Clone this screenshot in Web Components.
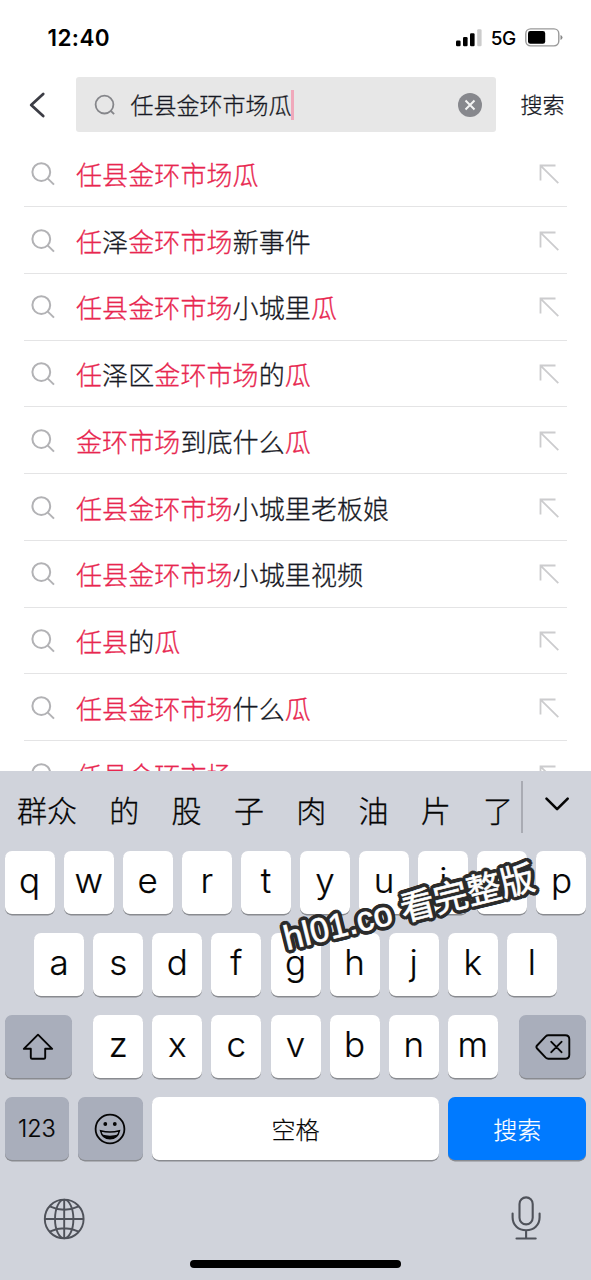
<!DOCTYPE html>
<html lang="zh-CN">
<head>
<meta charset="utf-8">
<title>搜索</title>
<style>
html,body{margin:0;height:100%;background:#fff;overflow:hidden}
body{font-family:Inter,"Noto Sans CJK SC",sans-serif}
</style>
</head>
<body>
<search-screen></search-screen>
<script>
function define(name, html) {
  const t = document.createElement('template');
  t.innerHTML = html;
  customElements.define(name, class extends HTMLElement {
    constructor() {
      super();
      this.attachShadow({ mode: 'open' }).append(t.content.cloneNode(true));
    }
  });
}

define('status-bar', `
<style>
:host{display:flex;height:77px;box-sizing:border-box;padding:0 28px 2px 47.5px;align-items:center;color:#000}
.time{font-size:22.5px;font-weight:600;flex:1;letter-spacing:.4px}
.net{font-size:19px;font-weight:500;margin:1px 9px 0 8.5px;letter-spacing:-.3px}
svg{display:block}
</style>
<span class="time">12:40</span>
<svg width="26" height="18" viewBox="0 0 26 18"><rect x="0" y="11.5" width="4.6" height="5.8" rx="1.2"/><rect x="7" y="8" width="4.6" height="9.3" rx="1.2"/><rect x="14" y="4.3" width="4.6" height="13" rx="1.2"/><rect x="21.2" y=".2" width="4.4" height="17.1" rx="1.2" fill="#ccc"/></svg>
<span class="net">5G</span>
<svg width="38" height="19" viewBox="0 0 38 19"><rect x=".8" y=".9" width="33" height="17" rx="4.8" fill="none" stroke="#999" stroke-width="1.4"/><rect x="3" y="3.1" width="17.2" height="12.6" rx="2.3"/><path d="M35.5 7v5q2-.8 2-2.5t-2-2.5z" fill="#888"/></svg>
`);

define('search-header', `
<style>
:host{display:flex;height:55px;align-items:center;color:#161823;font-weight:300;-webkit-text-stroke:.3px}
svg{display:block}
.back{margin-left:29px;margin-right:30px}
.field{display:flex;align-items:center;width:419.5px;height:54.5px;box-sizing:border-box;padding:0 14px 0 18px;background:#e7e7e7;border-radius:3px}
.q{font-size:23px;margin-left:14.5px;line-height:34px;white-space:nowrap;padding-top:2px}
.caret{width:3px;height:30px;background:#f0a9bb;flex:none;margin-left:-.5px}
.clear{margin-left:auto}
.go{font-size:22px;margin-left:25px;line-height:34px}
</style>
<svg class="back" width="17" height="26" viewBox="0 0 17 26" fill="none" stroke="#3c3d45" stroke-width="2.8" stroke-linecap="round" stroke-linejoin="round"><path d="M14.2 2 2.2 13l12 11"/></svg>
<div class="field">
<svg width="22" height="22" viewBox="0 0 22 22" fill="none" stroke="#85868a" stroke-width="1.8"><circle cx="10.5" cy="10.6" r="8.9"/><path d="m16.4 16.5 3.7 3.7"/></svg>
<span class="q"><slot></slot></span><span class="caret"></span>
<svg class="clear" width="24" height="24" viewBox="0 0 24 24"><circle cx="12" cy="12" r="12" fill="#87888d"/><path d="m7.5 7.5 9 9m0-9-9 9" stroke="#f3f3f3" stroke-width="2"/></svg>
</div>
<span class="go">搜索</span>
`);

define('suggestion-row', `
<style>
:host{display:flex;flex:none;height:66.75px;box-sizing:border-box;align-items:center;margin:0 24.5px 0 24px;border-bottom:1.4px solid #e4e4e5;padding:1px 8px 0 7px;color:#161823;font-weight:300;-webkit-text-stroke:.3px}
.t{font-size:26px;letter-spacing:.1px;line-height:38px;margin-left:21px;flex:1;white-space:nowrap;padding-top:4px}
::slotted(b){color:#e8264f;font-weight:inherit}
svg{display:block}
</style>
<svg width="24" height="24" viewBox="0 0 24 24" fill="none" stroke="#b2b2b5" stroke-width="2"><circle cx="10.3" cy="10.1" r="8.9"/><path d="m16.6 16.4 6.4 6.2"/></svg>
<span class="t"><slot></slot></span>
<svg width="20" height="20" viewBox="0 0 20 20" fill="none" stroke="#ccccce" stroke-width="1.8"><path d="M16.5 1.5h-15v15M1.8 1.8l17.5 17.4"/></svg>
`);

define('candidate-bar', `
<style>
:host{display:flex;height:80.3px;flex:none;align-items:flex-start;color:#050505;font-size:30px;font-weight:300;-webkit-text-stroke:.3px}
.words{display:flex;gap:32.3px;width:504px;padding:18.5px 0 0 17px;line-height:44px;white-space:nowrap}
i{width:1.5px;height:52px;margin-top:10px;background:#a9abb3}
svg{display:block;margin:25.5px 0 0 21.5px}
</style>
<div class="words"><span>群众</span><span>的</span><span>股</span><span>子</span><span>肉</span><span>油</span><span>片</span><span>了</span></div>
<i></i>
<svg width="26" height="17" viewBox="0 0 26 17" fill="none" stroke="#050505" stroke-width="2.6" stroke-linecap="round" stroke-linejoin="round"><path d="m2.5 2.6 10.6 10.6L23.7 2.6"/></svg>
`);

define('key-cap', `
<style>
:host{display:flex;width:50px;height:63.5px;flex:none;box-sizing:border-box;align-items:center;justify-content:center;border-radius:7px;background:#fff;box-shadow:0 1.4px 0 #898b90;color:#050505;font-size:35px;font-weight:300;line-height:44px;padding-bottom:6px;-webkit-text-stroke:.2px}
:host([tone=gray]){background:#a9aebb;padding:0;font-size:23.5px}
:host([tone=white]){padding:4px 0 0;font-size:24px}
:host([tone=blue]){background:#007aff;color:#fff;padding:4px 0 0;font-size:24px}
::slotted(svg){display:block}
</style><slot></slot>`);

define('key-row', `
<style>:host{display:flex;height:82px;gap:9.1px;padding:0 5px;justify-content:center;box-sizing:border-box}</style><slot></slot>`);

define('bottom-bar', `
<style>
:host{display:flex;height:81.4px;flex:none;justify-content:space-between;align-items:flex-start;box-sizing:border-box;padding:17px 50px 0 43px}
svg{display:block}
</style>
<svg width="42" height="44" viewBox="0 0 42 44" fill="none" stroke="#4f525a" stroke-width="1.9"><circle cx="21.2" cy="23" r="19.4"/><ellipse cx="21.2" cy="23" rx="9.2" ry="19.4"/><path d="M21.2 3.6v38.8M1.8 23h38.8M6.7 10.4q14.5 6.8 29 0M6.7 35.6q14.5-6.8 29 0"/></svg>
<svg width="30" height="46" viewBox="0 0 30 46" fill="none" stroke="#4f525a" stroke-width="2.1" stroke-linecap="round"><rect x="8.5" y="1.4" width="13.2" height="27" rx="6.6"/><path d="M1.6 17.5v3.8c0 8 5.8 13 13.5 13s13.5-5 13.5-13v-3.8M15.1 34.3v8M5.5 42.5h19.2"/></svg>
`);

define('soft-keyboard', `
<style>
:host{display:flex;flex-direction:column;height:509.5px;flex:none;background:#d0d3db}
.home{width:211px;height:8px;border-radius:4px;background:#000;margin:0 auto;flex:none}
key-row{flex:none}
.shift{width:66.5px;margin-right:12.4px}
.del{width:66.5px;margin-left:12.4px}
</style>
<candidate-bar></candidate-bar>
<key-row><key-cap>q</key-cap><key-cap>w</key-cap><key-cap>e</key-cap><key-cap>r</key-cap><key-cap>t</key-cap><key-cap>y</key-cap><key-cap>u</key-cap><key-cap>i</key-cap><key-cap>o</key-cap><key-cap>p</key-cap></key-row>
<key-row><key-cap>a</key-cap><key-cap>s</key-cap><key-cap>d</key-cap><key-cap>f</key-cap><key-cap>g</key-cap><key-cap>h</key-cap><key-cap>j</key-cap><key-cap>k</key-cap><key-cap>l</key-cap></key-row>
<key-row><key-cap class="shift" tone="gray"><svg width="32" height="28" viewBox="0 0 32 28" fill="none" stroke="#050505" stroke-width="1.9" stroke-linejoin="round"><path d="M16 1.7 1.8 15.8h7v8.6q0 1.3 1.3 1.3h11.8q1.3 0 1.3-1.3v-8.6h7z"/></svg></key-cap><key-cap>z</key-cap><key-cap>x</key-cap><key-cap>c</key-cap><key-cap>v</key-cap><key-cap>b</key-cap><key-cap>n</key-cap><key-cap>m</key-cap><key-cap class="del" tone="gray"><svg width="36" height="26" viewBox="0 0 36 26" fill="none" stroke="#050505" stroke-width="1.9" stroke-linejoin="round" stroke-linecap="round"><path d="M13.3 1.2h17q4 0 4 4v15.6q0 4-4 4h-17q-1.5 0-2.6-1.1L2.1 14.5q-1.4-1.5 0-3l8.6-9.2q1.1-1.1 2.6-1.1zM16.3 7.8l10.2 10.4m0-10.4L16.3 18.2"/></svg></key-cap></key-row>
<key-row><key-cap tone="gray" style="width:64px">123</key-cap><key-cap tone="gray" style="width:65px"><svg width="32" height="32" viewBox="0 0 32 32" fill="none" stroke="#050505" stroke-width="1.8"><circle cx="16" cy="16" r="14.4"/><circle cx="11.3" cy="11" r="1.9" fill="#050505" stroke="none"/><circle cx="20.8" cy="11" r="1.9" fill="#050505" stroke="none"/><path d="M6.6 17.8q9.4 2.6 18.8 0-1.8 8-9.4 8t-9.4-8z" stroke-width="1.5"/><path d="M8 21.5q8 2.3 16 0-2.5 4.3-8 4.3t-8-4.3z" fill="#050505" stroke="none"/></svg></key-cap><key-cap tone="white" style="width:287px">空格</key-cap><key-cap tone="blue" style="width:138px">搜索</key-cap></key-row>
<bottom-bar></bottom-bar>
<div class="home"></div>
`);

define('water-mark', `
<style>
:host{position:absolute;left:289px;top:917.5px;transform:rotate(-13.9deg);transform-origin:0 100%;font:400 34.3px/40px "Liberation Sans","Noto Sans CJK SC",sans-serif;height:40px;white-space:nowrap;color:#fff;-webkit-text-stroke:.6px #fff;
text-shadow:4px 0 #2b2b2b,3.7px 1.5px #2b2b2b,2.8px 2.8px #2b2b2b,1.5px 3.7px #2b2b2b,0 4px #2b2b2b,-1.5px 3.7px #2b2b2b,-2.8px 2.8px #2b2b2b,-3.7px 1.5px #2b2b2b,-4px 0 #2b2b2b,-3.7px -1.5px #2b2b2b,-2.8px -2.8px #2b2b2b,-1.5px -3.7px #2b2b2b,0 -4px #2b2b2b,1.5px -3.7px #2b2b2b,2.8px -2.8px #2b2b2b,3.7px -1.5px #2b2b2b,2px 0 #2b2b2b,-2px 0 #2b2b2b,0 2px #2b2b2b,0 -2px #2b2b2b}
</style><slot></slot>`);

define('search-screen', `
<style>
:host{display:flex;flex-direction:column;position:relative;width:591px;height:1280px;overflow:hidden;background:#fff}
status-bar,search-header{flex:none}
.list{display:flex;flex-direction:column;flex:1;min-height:0;overflow:hidden;padding-top:8.4px}
</style>
<status-bar></status-bar>
<search-header>任县金环市场瓜</search-header>
<div class="list">
<suggestion-row><b>任县金环市场瓜</b></suggestion-row>
<suggestion-row><b>任</b>泽<b>金环市场</b>新事件</suggestion-row>
<suggestion-row><b>任县金环市场</b>小城里<b>瓜</b></suggestion-row>
<suggestion-row><b>任</b>泽区<b>金环市场</b>的<b>瓜</b></suggestion-row>
<suggestion-row><b>金环市场</b>到底什么<b>瓜</b></suggestion-row>
<suggestion-row><b>任县金环市场</b>小城里老板娘</suggestion-row>
<suggestion-row><b>任县金环市场</b>小城里视频</suggestion-row>
<suggestion-row><b>任县</b>的<b>瓜</b></suggestion-row>
<suggestion-row><b>任县金环市场</b>什么<b>瓜</b></suggestion-row>
<suggestion-row><b>任县金环市场</b></suggestion-row>
</div>
<soft-keyboard></soft-keyboard>
<water-mark>hl01.co 看完整版</water-mark>
`);
</script>
</body>
</html>
